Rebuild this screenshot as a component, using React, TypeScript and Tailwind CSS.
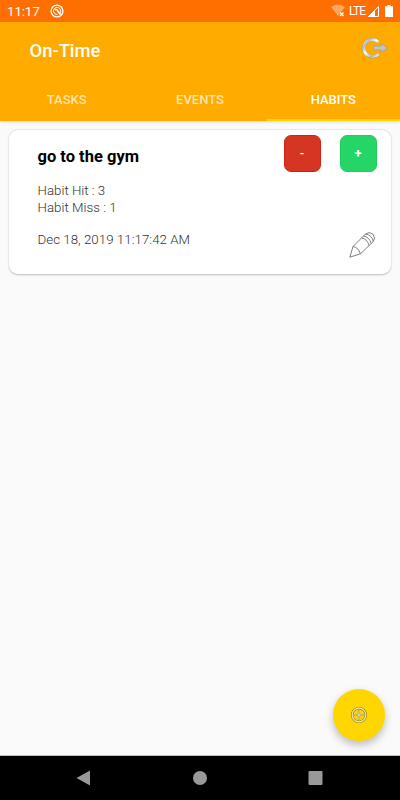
import React, { FC } from "react";

const tabs = ["TASKS", "EVENTS", "HABITS"];

const StatusBar: FC = () => {
  return (
    <div className="flex h-[22px] shrink-0 items-center bg-[#FF6F00] pl-[7px] pr-[7px] text-white">
      <span className="w-[43px] text-[13.5px] leading-[22px] tracking-[-0.2px]">11:17</span>
      <svg width="14" height="14" viewBox="0 0 14 14" fill="none" stroke="white">
        <circle cx="7" cy="7" r="5.9" strokeWidth="1.3" />
        <path d="M9.8 9.3A3.6 3.6 0 1 0 7.5 10.5" strokeWidth="1" />
        <path d="M4.8 5.7A2.4 2.4 0 0 1 8 7.5L11 11" strokeWidth="1.7" />
      </svg>
      <div className="ml-auto flex items-center">
        <svg width="16" height="14" viewBox="0 0 16 14">
          <path d="M0 3Q7-2 14 3L7 12Z" fill="white" fillOpacity=".4" />
          <path d="M9 8.5l3.5 3.5M12.5 8.5L9 12" stroke="white" strokeWidth="1.3" />
        </svg>
        <span className="ml-[2px] w-[16px] text-[12px] leading-[22px] tracking-[-0.9px]">LTE</span>
        <svg className="ml-[2px]" width="13" height="13" viewBox="0 0 13 13">
          <path d="M11.5 1.5V11.5H1.5Z" fill="none" stroke="white" />
          <path d="M8 5V12H1Z" fill="white" />
        </svg>
        <svg className="ml-[5px]" width="8" height="12" viewBox="0 0 8 12">
          <path d="M2.5 0h3v1.2H8V12H0V1.2h2.5Z" fill="white" />
        </svg>
      </div>
    </div>
  );
};

const LogoutIcon: FC = () => (
  <svg className="-mt-[4px]" width="28" height="24" viewBox="0 0 28 24">
    <defs>
      <linearGradient id="metal" x1="0" y1="0" x2="1" y2="1">
        <stop offset="0" stopColor="#eeeeee" />
        <stop offset=".2" stopColor="#bbbbbb" />
        <stop offset=".45" stopColor="#f8f8f8" />
        <stop offset=".75" stopColor="#b5b5b5" />
        <stop offset="1" stopColor="#eeeeee" />
      </linearGradient>
    </defs>
    <path d="M18.5 6A8.6 8.6 0 1 0 18.5 18" fill="none" stroke="#b39a58" strokeWidth="3.8" />
    <path d="M18.5 6A8.6 8.6 0 1 0 18.5 18" fill="none" stroke="url(#metal)" strokeWidth="3" />
    <path d="M13.5 10h7.5V7.6L27.6 12 21 16.4V14H13.5Z" fill="#c2c2c2" stroke="#a3a095" strokeWidth=".8" />
  </svg>
);

const PencilIcon: FC = () => (
  <svg width="26" height="26" viewBox="0 0 26 26" fill="none" stroke="#808080" strokeWidth="1">
    <path d="M.8 25.2L4 14.5 16.5 2Q20-.8 23.8 2 27 6 24.3 9.5L11.5 21.8Z" />
    <path d="M4 14.5Q9.5 15.5 11.5 21.8" />
    <path d="M12.5 6Q18.5 7 20 13.5M14.5 4Q20.5 5 22.2 11.5M16.5 2Q23 3 24.3 9.5" />
  </svg>
);

const HabitCard: FC = () => {
  return (
    <div className="mx-[9px] mt-[8.5px] flex h-[144px] justify-between rounded-[9px] bg-white pl-[28.5px] pr-[14.5px] pt-[5px] shadow-[0_0.5px_2px_rgba(0,0,0,0.25)]">
      <div>
        <h2 className="mt-[11px] text-[16.5px] font-bold leading-[22px] text-black">go to the gym</h2>
        <div className="mt-[14px] text-[13.3px] font-light leading-[17.5px] text-[#333333]">
          <p>Habit Hit : 3</p>
          <p>Habit Miss : 1</p>
          <p className="mt-[14px] tracking-[0.03px]">Dec 18, 2019 11:17:42 AM</p>
        </div>
      </div>
      <div className="flex flex-col items-end">
        <div className="flex gap-[19px]">
          <button className="h-[37px] w-[37px] rounded-[7px] border border-[#D02318] bg-[#D53522] pt-[1px] text-[13px] font-medium text-white">-</button>
          <button className="h-[37px] w-[37px] rounded-[7px] border border-[#20CD5E] bg-[#25D565] pt-[1px] text-[13px] font-bold text-white">+</button>
        </div>
        <button className="mr-[2px] mt-[60px]">
          <PencilIcon />
        </button>
      </div>
    </div>
  );
};

const App: FC = () => {
  return (
    <div className="flex h-[800px] w-[400px] flex-col overflow-hidden bg-[#FAFAFA] font-['Roboto',sans-serif]">
      <StatusBar />
      <header className="flex h-[99px] shrink-0 flex-col bg-[#FFAB00] shadow-[0_1px_3px_rgba(0,0,0,0.15)]">
        <div className="flex h-[56px] items-center justify-between pl-[29.5px] pr-[12px]">
          <h1 className="pt-[1px] text-[18.4px] font-medium text-white">On-Time</h1>
          <LogoutIcon />
        </div>
        <nav className="grid flex-1 grid-cols-3 text-[13px] font-medium">
          {tabs.map((tab) => (
            <button
              key={tab}
              className={
                tab === "HABITS"
                  ? "border-b-2 border-[#FFD600] pt-[3px] text-white"
                  : "border-b-2 border-transparent pt-[3px] text-white/70"
              }
            >
              {tab}
            </button>
          ))}
        </nav>
      </header>
      <main className="flex flex-1 flex-col">
        <HabitCard />
        <button className="mb-[14px] ml-auto mr-[15px] mt-auto flex h-[52px] w-[52px] items-center justify-center rounded-full bg-[#FFD600] shadow-[0_4px_8px_rgba(0,0,0,0.25)]">
          <svg width="18" height="18" viewBox="0 0 18 18" fill="none">
            <circle cx="9" cy="9" r="6.8" stroke="#97862c" strokeWidth="2.6" />
            <circle cx="9" cy="9" r="6.8" stroke="#eee9b0" strokeWidth="1.2" />
            <path d="M9 4.7v8.6M4.7 9h8.6" stroke="#97862c" strokeWidth="2.2" />
            <path d="M9 5v8M5 9h8" stroke="#eee9b0" strokeWidth="1.1" />
          </svg>
        </button>
      </main>
      <div className="flex h-[45px] shrink-0 items-center border-t border-[#BDBDBD] bg-black">
        <svg width="400" height="44" viewBox="0 0 400 44" fill="#999999">
          <path d="M76.5 22L90 14.5V29.5Z" />
          <circle cx="200" cy="22" r="7" />
          <rect x="308.5" y="15" width="14" height="14" rx="1" />
        </svg>
      </div>
    </div>
  );
};

export default App;
